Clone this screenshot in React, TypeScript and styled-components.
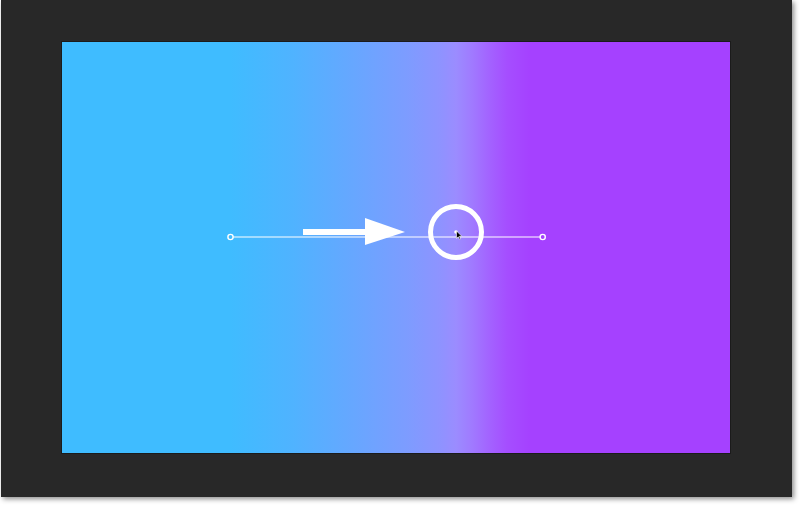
import React from "react";
import styled, { createGlobalStyle } from "styled-components";

const Global = createGlobalStyle`
  html, body { margin: 0; padding: 0; background: #ffffff; }
  body { font-family: "Liberation Sans", Arial, sans-serif; }
`;

const Page = styled.div`
  width: 800px;
  height: 506px;
  position: relative;
  overflow: hidden;
`;

const Workspace = styled.div`
  margin-left: 1px;
  width: 791px;
  height: 497px;
  background: #282828;
  box-shadow: 2px 2px 5px rgba(0, 0, 0, 0.45);
  display: flex;
  align-items: flex-start;
  justify-content: flex-start;
  padding: 41px 0 0 60px;
  box-sizing: border-box;
`;

const Canvas = styled.div`
  position: relative;
  width: 670px;
  height: 413px;
  box-sizing: border-box;
  border: 1px solid #1b1b1b;
  background: linear-gradient(
    90deg,
    #3fbcff 168px,
    #4fb3ff 230px,
    #66a7ff 290px,
    #7d9cff 345px,
    #8e93ff 378px,
    #9b8cff 394px,
    #a07aff 410px,
    #a362ff 428px,
    #a54eff 445px,
    #a541ff 468px
  );
`;

const Overlay = styled.svg`
  position: absolute;
  left: -1px;
  top: -1px;
  width: 670px;
  height: 413px;
  overflow: visible;
`;

export default function App() {
  const ox = 61;
  const oy = 41;
  const X = (x: number) => x - ox;
  const Y = (y: number) => y - oy;
  return (
    <>
      <Global />
      <Page>
        <Workspace>
          <Canvas>
            <Overlay viewBox="0 0 670 413">
              <line x1={X(233)} y1={Y(237)} x2={X(540)} y2={Y(237)} stroke="#ffffff" strokeWidth={1.1} />
              <circle cx={X(230.5)} cy={Y(237)} r={2.6} fill="none" stroke="#ffffff" strokeWidth={1.4} />
              <circle cx={X(542.7)} cy={Y(237)} r={2.6} fill="none" stroke="#ffffff" strokeWidth={1.4} />
              <rect x={X(303)} y={Y(229)} width={64} height={6} fill="#ffffff" />
              <polygon points={`${X(365)},${Y(218)} ${X(405)},${Y(232)} ${X(365)},${Y(245)}`} fill="#ffffff" />
              <circle cx={X(456)} cy={Y(232)} r={25.5} fill="none" stroke="#ffffff" strokeWidth={5} />
              <circle cx={X(456)} cy={Y(232)} r={1.8} fill="#ffffff" />
              <path
                d={`M ${X(456.5)} ${Y(231)} L ${X(456.5)} ${Y(238.5)} L ${X(458.3)} ${Y(236.8)} L ${X(459.6)} ${Y(239.4)} L ${X(460.6)} ${Y(238.9)} L ${X(459.4)} ${Y(236.3)} L ${X(461.8)} ${Y(236.3)} Z`}
                fill="#000000"
                stroke="#ffffff"
                strokeWidth={0.6}
              />
            </Overlay>
          </Canvas>
        </Workspace>
      </Page>
    </>
  );
}
